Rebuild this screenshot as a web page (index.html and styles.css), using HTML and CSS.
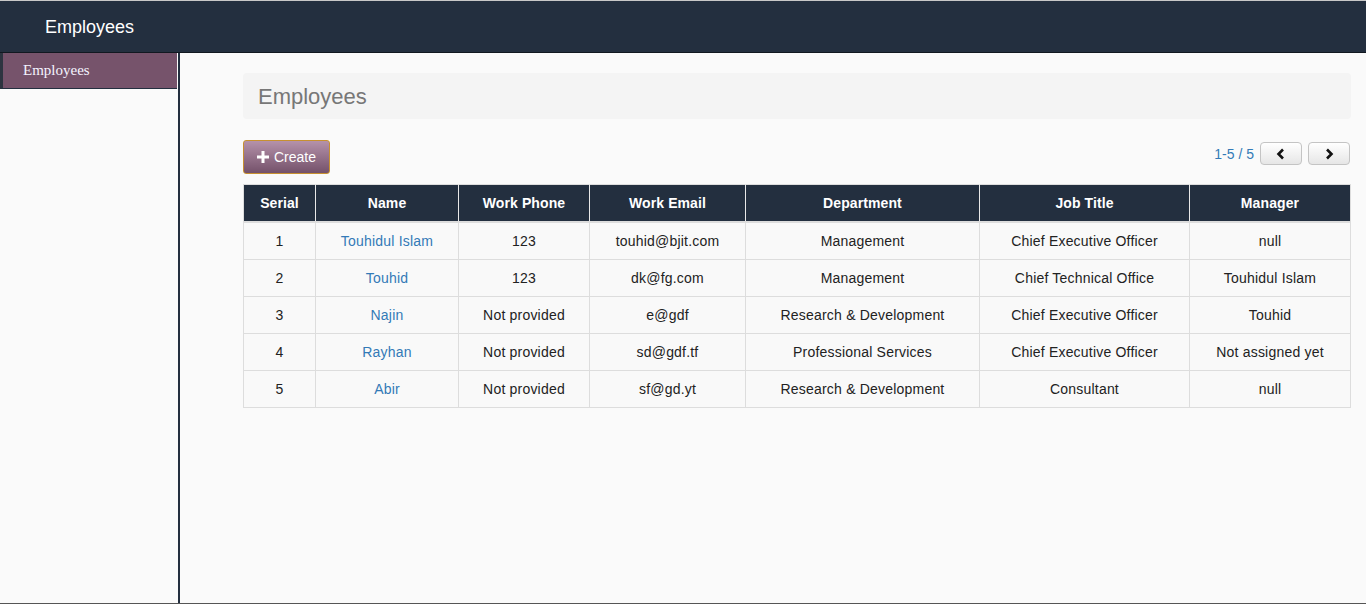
FILE: index.html
```html
<!DOCTYPE html>
<html>
<head>
<meta charset="utf-8">
<link rel="stylesheet" href="styles.css">
</head>
<body>
<header class="navbar"><span class="brand">Employees</span></header>
<div class="layout">
  <aside class="sidebar">
    <a class="side-item">Employees</a>
  </aside>
  <main class="content">
    <div class="page-header">Employees</div>
    <div class="toolbar">
      <button class="btn-create"><svg class="plus" width="12" height="12" viewBox="0 0 12 12"><path d="M4.5 0h3v4.5H12v3H7.5V12h-3V7.5H0v-3h4.5z" fill="#fff"/></svg>Create</button>
      <div class="pager">
        <span class="pager-text">1-5 / 5</span>
        <button class="pager-btn"><svg width="12" height="12" viewBox="0 0 12 12"><path d="M8 1.5L3.5 6 8 10.5" fill="none" stroke="#111" stroke-width="2.6" stroke-linejoin="miter"/></svg></button>
        <button class="pager-btn"><svg width="12" height="12" viewBox="0 0 12 12"><path d="M4 1.5L8.5 6 4 10.5" fill="none" stroke="#111" stroke-width="2.6" stroke-linejoin="miter"/></svg></button>
      </div>
    </div>
    <table class="grid">
      <colgroup>
        <col style="width:72px"><col style="width:143px"><col style="width:131px"><col style="width:156px"><col style="width:234px"><col style="width:210px"><col style="width:161px">
      </colgroup>
      <thead>
        <tr><th>Serial</th><th>Name</th><th>Work Phone</th><th>Work Email</th><th>Department</th><th>Job Title</th><th>Manager</th></tr>
      </thead>
      <tbody>
        <tr><td>1</td><td><a class="link">Touhidul Islam</a></td><td>123</td><td>touhid@bjit.com</td><td>Management</td><td>Chief Executive Officer</td><td>null</td></tr>
        <tr><td>2</td><td><a class="link">Touhid</a></td><td>123</td><td>dk@fg.com</td><td>Management</td><td>Chief Technical Office</td><td>Touhidul Islam</td></tr>
        <tr><td>3</td><td><a class="link">Najin</a></td><td>Not provided</td><td>e@gdf</td><td>Research &amp; Development</td><td>Chief Executive Officer</td><td>Touhid</td></tr>
        <tr><td>4</td><td><a class="link">Rayhan</a></td><td>Not provided</td><td>sd@gdf.tf</td><td>Professional Services</td><td>Chief Executive Officer</td><td>Not assigned yet</td></tr>
        <tr><td>5</td><td><a class="link">Abir</a></td><td>Not provided</td><td>sf@gd.yt</td><td>Research &amp; Development</td><td>Consultant</td><td>null</td></tr>
      </tbody>
    </table>
  </main>
</div>
</body>
</html>
```

FILE: styles.css
```css
html, body {
  margin: 0;
  padding: 0;
  height: 100%;
}
body {
  font-family: "Liberation Sans", Arial, sans-serif;
  font-size: 14px;
  color: #222;
  background: #fafafa;
  display: flex;
  flex-direction: column;
  box-sizing: border-box;
  border-bottom: 1px solid #555;
  overflow: hidden;
}
.navbar {
  height: 51px;
  background: #232f3f;
  border-top: 1px solid #c8c8c8;
  border-bottom: 1px solid #111820;
  display: flex;
  align-items: center;
  padding-left: 45px;
  flex: none;
}
.brand {
  color: #fff;
  font-size: 18px;
  line-height: 20px;
}
.layout {
  flex: 1;
  display: flex;
  min-height: 0;
}
.sidebar {
  width: 178px;
  flex: none;
  border-right: 2px solid #232f3f;
  background: #fafafa;
}
.side-item {
  display: block;
  height: 35px;
  line-height: 35px;
  background: #76536b;
  border-left: 3px solid #2d3440;
  border-bottom: 1px solid #232f3f;
  margin-right: 1px;
  padding-left: 20px;
  color: #f4f4ff;
  font-family: "Liberation Serif", "Times New Roman", serif;
  font-size: 15px;
}
.content {
  flex: 1;
  padding: 20px 16px 0 63px;
}
.page-header {
  background: #f4f4f4;
  border-radius: 4px;
  height: 46px;
  box-sizing: border-box;
  padding: 2px 0 0 15px;
  display: flex;
  align-items: center;
  font-size: 22px;
  color: #777;
}
.toolbar {
  margin-top: 21px;
  display: flex;
  justify-content: space-between;
  align-items: flex-start;
}
.btn-create {
  height: 34px;
  width: 87px;
  border: 1px solid #c79030;
  border-radius: 3px;
  background: linear-gradient(#b592aa, #74516a);
  color: #fff;
  font-family: "Liberation Sans", Arial, sans-serif;
  font-size: 14px;
  display: flex;
  align-items: center;
  justify-content: center;
  gap: 5px;
  padding: 0;
}
.pager {
  display: flex;
  align-items: center;
  gap: 6px;
  margin-top: 2px;
  margin-right: 1px;
}
.pager-text {
  color: #337ab7;
  font-size: 14px;
  margin-right: 0;
}
.pager-btn {
  width: 42px;
  height: 23px;
  border: 1px solid #c4c4c4;
  border-radius: 4px;
  background: linear-gradient(#ffffff, #e6e6e6);
  display: flex;
  align-items: center;
  justify-content: center;
  padding: 0;
}
.grid {
  margin-top: 10px;
  width: 1107px;
  table-layout: fixed;
  border-collapse: collapse;
  border: 1px solid #ddd;
}
.grid th {
  background: #232f3f;
  color: #fff;
  font-weight: bold;
  height: 36px;
  padding: 0 8px;
  border-left: 1px solid #e8e8e8;
  border-bottom: 2px solid #ddd;
  text-align: center;
  letter-spacing: 0.1px;
}
.grid th:first-child {
  border-left: 1px solid #ddd;
}
.grid td {
  height: 36px;
  padding: 0 8px;
  border: 1px solid #ddd;
  text-align: center;
  color: #222;
  background: #f9f9f9;
  letter-spacing: 0.2px;
}
.link {
  color: #337ab7;
  text-decoration: none;
}
```
